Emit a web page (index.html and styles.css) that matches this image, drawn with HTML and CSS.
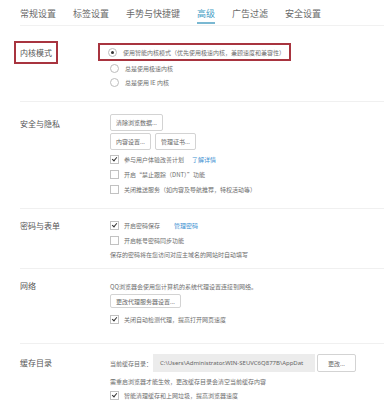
FILE: index.html
```html
<!DOCTYPE html>
<html lang="zh-CN">
<head>
    <meta charset="UTF-8">
    <title>高级设置</title>
    <link rel="stylesheet" href="styles.css">
</head>
<body>
    <div class="tabs">
        <span class="tab">常规设置</span>
        <span class="tab">标签设置</span>
        <span class="tab">手势与快捷键</span>
        <span class="tab active">高级</span>
        <span class="tab">广告过滤</span>
        <span class="tab">安全设置</span>
    </div>

    <div class="section sec-kernel">
        <div class="label"><span class="marked">内核模式</span></div>
        <div class="content">
            <div class="row marked-row"><span class="radio on"></span>使用智能内核模式（优先使用极速内核，兼顾速度和兼容性）</div>
            <div class="row"><span class="radio"></span>总是使用极速内核</div>
            <div class="row"><span class="radio"></span>总是使用 IE 内核</div>
        </div>
    </div>

    <div class="section sec-privacy">
        <div class="label">安全与隐私</div>
        <div class="content">
            <div class="btn-row"><button class="btn">清除浏览数据...</button></div>
            <div class="btn-row">
                <button class="btn">内容设置...</button>
                <button class="btn">管理证书...</button>
            </div>
            <div class="row check-row"><span class="check on"></span>参与用户体验改善计划<a class="link">了解详情</a></div>
            <div class="row check-row"><span class="check"></span>开启“禁止跟踪（DNT）”功能</div>
            <div class="row check-row"><span class="check"></span>关闭推送服务（如内容及导航推荐，特权活动等）</div>
        </div>
    </div>

    <div class="section sec-password">
        <div class="label">密码与表单</div>
        <div class="content">
            <div class="row check-row"><span class="check on"></span>开启密码保存<a class="link wide">管理密码</a></div>
            <div class="row check-row"><span class="check"></span>开启帐号密码同步功能</div>
            <div class="row note">保存的密码将在您访问对应主域名的网站时自动填写</div>
        </div>
    </div>

    <div class="section sec-network">
        <div class="label">网络</div>
        <div class="content">
            <div class="row note">QQ浏览器会使用您计算机的系统代理设置连接到网络。</div>
            <div class="btn-row"><button class="btn">更改代理服务器设置...</button></div>
            <div class="row check-row"><span class="check on"></span>关闭自动检测代理，提高打开网页速度</div>
        </div>
    </div>

    <div class="section sec-cache">
        <div class="label">缓存目录</div>
        <div class="content">
            <div class="cache-row">
                <span>当前缓存目录：</span>
                <span class="path">C:\Users\Administrator.WIN-SEUVC6Q877B\AppDat</span>
                <button class="btn">更改...</button>
            </div>
            <div class="row note">需重启浏览器才能生效，更改缓存目录会清空当前缓存内容</div>
            <div class="row check-row"><span class="check on"></span>智能清理缓存和上网垃圾，提高浏览器速度</div>
        </div>
    </div>
</body>
</html>
```

FILE: styles.css
```css
body {
    margin: 0;
    width: 384px;
    height: 400px;
    overflow: hidden;
    background-color: #fff;
    font-family: "Noto Sans CJK SC", "Noto Sans", sans-serif;
    color: #777;
}

/* tab bar */
.tabs {
    display: flex;
    height: 25px;
    margin-left: 20px;
    border-bottom: 1px solid #f1f1f1;
}

.tab {
    position: relative;
    margin-right: 17px;
    padding-top: 8px;
    font-size: 9px;
    line-height: 12px;
    color: #6a6a6a;
}

.tab.active {
    color: #3f9cc4;
}

.tab.active::after {
    content: "";
    position: absolute;
    left: 0;
    right: 0;
    bottom: 1px;
    height: 2px;
    background-color: #7ab8d2;
}

/* sections */
.section {
    display: flex;
    margin-left: 20px;
    border-bottom: 1px solid #f0f0f0;
}

.label {
    width: 90px;
    flex-shrink: 0;
    font-size: 8px;
    line-height: 12px;
    color: #555;
}

.content {
    display: flex;
    flex-direction: column;
    font-size: 6px;
    color: #6e6e6e;
}

.row {
    display: flex;
    align-items: center;
    height: 14px;
    white-space: nowrap;
}

.check-row {
    height: 15px;
}

.note {
    height: 12px;
}

/* red annotation boxes */
.marked {
    outline: 2px solid #a8343f;
    outline-offset: 4px;
}

.marked-row {
    height: 14px;
    margin-left: -12px;
    padding: 0 4px 0 8px;
    border: 2px solid #a8343f;
}

/* radio and checkbox */
.radio {
    width: 7px;
    height: 7px;
    margin-right: 6px;
    border: 1px solid #bdbdbd;
    border-radius: 50%;
    display: flex;
    align-items: center;
    justify-content: center;
}

.radio.on::after {
    content: "";
    width: 3px;
    height: 3px;
    border-radius: 50%;
    background-color: #333;
}

.check {
    position: relative;
    width: 7px;
    height: 7px;
    margin-right: 5px;
    border: 1px solid #c2c2c2;
    background-color: #fff;
}

.check.on::after {
    content: "";
    position: absolute;
    left: 2px;
    top: 0;
    width: 2px;
    height: 4px;
    border: solid #333;
    border-width: 0 1px 1px 0;
    transform: rotate(40deg);
}

.link {
    margin-left: 8px;
    color: #3b8fd1;
}

.link.wide {
    margin-left: 14px;
}

/* buttons */
.btn-row {
    display: flex;
    gap: 4px;
    margin-bottom: 2px;
}

.btn {
    height: 17px;
    padding: 0 5px;
    border: 1px solid #d3d3d3;
    border-radius: 2px;
    background-color: #fff;
    font-family: inherit;
    font-size: 6px;
    color: #666;
}

/* per section spacing */
.sec-kernel {
    padding: 17px 0 12px;
}

.sec-kernel .label {
    margin-top: 4px;
}

.sec-privacy {
    padding: 12px 0 11px;
}

.sec-privacy .label {
    margin-top: 4px;
}

.sec-password {
    padding: 9px 0 8px;
}

.sec-password .label {
    margin-top: 2px;
}

.sec-network {
    padding: 11px 0 16px;
}

.sec-network .btn-row {
    margin-top: 2px;
}

.sec-network .btn {
    height: 14px;
}

.sec-network .check-row {
    margin-top: 2px;
}

.sec-cache {
    padding-top: 10px;
    border-bottom: none;
}

.sec-cache .label {
    margin-top: 3px;
}

.sec-cache .note {
    height: 14px;
    margin-top: 2px;
}

.cache-row {
    display: flex;
    align-items: center;
    white-space: nowrap;
}

.path {
    display: flex;
    align-items: center;
    width: 155px;
    height: 18px;
    margin-left: 1px;
    padding-left: 7px;
    background-color: #ececec;
    font-family: "Noto Sans", sans-serif;
    font-size: 6px;
    color: #666;
}

.cache-row .btn {
    height: 18px;
    margin-left: 2px;
    padding: 0 10px;
}
```
